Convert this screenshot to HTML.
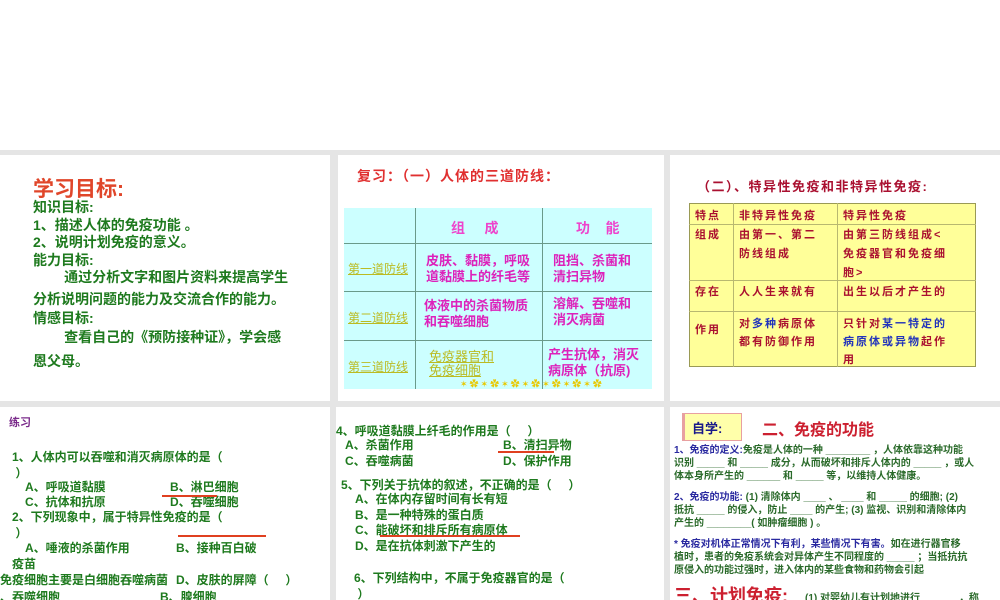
<!DOCTYPE html>
<html><head><meta charset="utf-8"><style>
*{margin:0;padding:0;box-sizing:border-box}
body{width:1000px;height:600px;position:relative;background:#fff;overflow:hidden;font-family:"Liberation Sans","Noto Sans CJK SC",sans-serif}
.bg{position:absolute;left:0;top:150px;width:1000px;height:450px;background:#e5e5e5}
.p{position:absolute;background:#fff;overflow:hidden}
.t{position:absolute;white-space:nowrap}
.g{color:#1e7a1e;font-weight:bold}
</style></head><body>
<div class="bg"></div>
<div class="p" style="left:0;top:155px;width:330px;height:246px">
<div class="t" style="left:33px;top:18px;font-size:21px;color:#e0462a;font-weight:bold">学习目标:</div>
<div class="t g" style="left:33px;top:44px;font-size:14px;line-height:17.5px">知识目标:<br>1、描述人体的免疫功能 。<br>2、说明计划免疫的意义。<br>能力目标:<br>&nbsp;&nbsp;&nbsp;&nbsp;&nbsp;&nbsp;&nbsp;&nbsp;通过分析文字和图片资料来提高学生</div>
<div class="t g" style="left:33px;top:135px;font-size:14px;line-height:19px">分析说明问题的能力及交流合作的能力。<br>情感目标:<br>&nbsp;&nbsp;&nbsp;&nbsp;&nbsp;&nbsp;&nbsp;&nbsp;查看自己的《预防接种证》，学会感</div>
<div class="t g" style="left:33px;top:196px;font-size:14px">恩父母。</div>
</div>
<div class="p" style="left:338px;top:155px;width:326px;height:246px">
<div class="t" style="left:19px;top:11px;font-size:14px;color:#e03030;font-weight:bold;letter-spacing:1px">复习：（一）人体的三道防线：</div>
<div style="position:absolute;left:6px;top:53px;width:308px;height:181px;background:#ccffff"></div>
<div style="position:absolute;left:77px;top:53px;width:1px;height:181px;background:#6a9a8a"></div>
<div style="position:absolute;left:204px;top:53px;width:1px;height:181px;background:#6a9a8a"></div>
<div style="position:absolute;left:6px;top:88px;width:308px;height:1px;background:#6a9a8a"></div>
<div style="position:absolute;left:6px;top:136px;width:308px;height:1px;background:#6a9a8a"></div>
<div style="position:absolute;left:6px;top:185px;width:308px;height:1px;background:#6a9a8a"></div>
<div class="t" style="left:113px;top:63px;font-size:14px;color:#ee44cc;font-weight:bold">组&nbsp;&nbsp;&nbsp;&nbsp;&nbsp;成</div>
<div class="t" style="left:238px;top:63px;font-size:14px;color:#ee44cc;font-weight:bold">功&nbsp;&nbsp;&nbsp;&nbsp;能</div>
<div class="t" style="left:10px;top:105px;font-size:12px;color:#bbbb22;text-decoration:underline">第一道防线</div>
<div class="t" style="left:10px;top:154px;font-size:12px;color:#bbbb22;text-decoration:underline">第二道防线</div>
<div class="t" style="left:10px;top:203px;font-size:12px;color:#bbbb22;text-decoration:underline">第三道防线</div>
<div class="t" style="left:88px;top:98px;font-size:13px;line-height:16px;color:#dd22bb;font-weight:bold">皮肤、黏膜，呼吸<br>道黏膜上的纤毛等</div>
<div class="t" style="left:215px;top:98px;font-size:13px;line-height:16px;color:#dd22bb;font-weight:bold">阻挡、杀菌和<br>清扫异物</div>
<div class="t" style="left:86px;top:143px;font-size:13px;line-height:16px;color:#dd22bb;font-weight:bold">体液中的杀菌物质<br>和吞噬细胞</div>
<div class="t" style="left:215px;top:141px;font-size:13px;line-height:16px;color:#dd22bb;font-weight:bold">溶解、吞噬和<br>消灭病菌</div>
<div class="t" style="left:91px;top:195px;font-size:13px;line-height:14px;color:#bbbb22;text-decoration:underline">免疫器官和<br>免疫细胞</div>
<div class="t" style="left:210px;top:192px;font-size:13px;line-height:16px;color:#dd22bb;font-weight:bold">产生抗体，消灭<br>病原体（抗原)</div>
<div class="t" style="left:122px;top:222px;font-size:9px;color:#e8c800;letter-spacing:2px">✶✿✶✿✶✿✶✿✶✿✶✿✶✿</div>
</div>
<div class="p" style="left:670px;top:155px;width:330px;height:246px">
<div class="t" style="left:27px;top:21px;font-size:13px;color:#aa1030;font-weight:bold;letter-spacing:1.5px">（二）、特异性免疫和非特异性免疫:</div>
<div style="position:absolute;left:19px;top:48px;width:287px;height:164px;background:#ffff99;border:1px solid #9a9a55"></div>
<div style="position:absolute;left:63px;top:48px;width:1px;height:164px;background:#b8b870"></div>
<div style="position:absolute;left:167px;top:48px;width:1px;height:164px;background:#b8b870"></div>
<div style="position:absolute;left:19px;top:69px;width:287px;height:1px;background:#b8b870"></div>
<div style="position:absolute;left:19px;top:125px;width:287px;height:1px;background:#b8b870"></div>
<div style="position:absolute;left:19px;top:156px;width:287px;height:1px;background:#b8b870"></div>
<div class="t" style="left:25px;top:52px;font-size:11px;line-height:19px;color:#aa1030;font-weight:bold;letter-spacing:2px">特点<br>组成<br><br><br>存在<br><br>作用</div>
<div class="t" style="left:69px;top:52px;font-size:11px;line-height:19px;color:#aa1030;font-weight:bold;letter-spacing:2px">非特异性免疫<br>由第一、第二<br>防线组成</div>
<div class="t" style="left:173px;top:52px;font-size:11px;line-height:19px;color:#aa1030;font-weight:bold;letter-spacing:2px">特异性免疫<br>由第三防线组成&lt;<br>免疫器官和免疫细<br>胞&gt;</div>
<div class="t" style="left:69px;top:128px;font-size:11px;color:#aa1030;font-weight:bold;letter-spacing:2px">人人生来就有</div>
<div class="t" style="left:173px;top:128px;font-size:11px;color:#aa1030;font-weight:bold;letter-spacing:2px">出生以后才产生的</div>
<div class="t" style="left:69px;top:160px;font-size:11px;line-height:18px;color:#aa1030;font-weight:bold;letter-spacing:2px">对<span style="color:#2233bb">多种</span>病原体<br>都有防御作用</div>
<div class="t" style="left:173px;top:160px;font-size:11px;line-height:18px;color:#aa1030;font-weight:bold;letter-spacing:2px">只针对<span style="color:#2233bb">某一特定的<br>病原体或异物</span>起作<br>用</div>
</div>
<div class="p" style="left:0;top:407px;width:330px;height:193px">
<div class="t" style="left:9px;top:7px;font-size:11px;color:#7a2a8a;font-weight:bold">练习</div>
<div class="t g" style="left:12px;top:42px;font-size:12px;line-height:16px">1、人体内可以吞噬和消灭病原体的是（<br>&nbsp;）</div>
<div class="t g" style="left:25px;top:73px;font-size:12px;line-height:15px">A、呼吸道黏膜<br>C、抗体和抗原</div>
<div class="t g" style="left:170px;top:73px;font-size:12px;line-height:15px">B、淋巴细胞<br>D、吞噬细胞</div>
<div style="position:absolute;left:162px;top:88px;width:55px;height:2px;background:#e04020"></div>
<div class="t g" style="left:12px;top:102px;font-size:12px;line-height:16px">2、下列现象中，属于特异性免疫的是（<br>&nbsp;）</div>
<div style="position:absolute;left:178px;top:128px;width:88px;height:2px;background:#e04020"></div>
<div class="t g" style="left:25px;top:132px;font-size:12px">A、唾液的杀菌作用</div>
<div class="t g" style="left:176px;top:132px;font-size:12px">B、接种百白破</div>
<div class="t g" style="left:12px;top:148px;font-size:12px">疫苗</div>
<div class="t g" style="left:0;top:164px;font-size:12px">免疫细胞主要是白细胞吞噬病菌</div>
<div class="t g" style="left:176px;top:164px;font-size:12px">D、皮肤的屏障（&nbsp;&nbsp;&nbsp;&nbsp;&nbsp;）</div>
<div class="t g" style="left:0;top:181px;font-size:12px">、吞噬细胞</div>
<div class="t g" style="left:160px;top:181px;font-size:12px">B、腺细胞</div>
</div>
<div class="p" style="left:336px;top:407px;width:328px;height:193px">
<div class="t g" style="left:0;top:15px;font-size:12px">4、呼吸道黏膜上纤毛的作用是（&nbsp;&nbsp;&nbsp;&nbsp;&nbsp;）</div>
<div class="t g" style="left:9px;top:30px;font-size:12px;line-height:16px">A、杀菌作用<br>C、吞噬病菌</div>
<div class="t g" style="left:167px;top:30px;font-size:12px;line-height:16px">B、清扫异物<br>D、保护作用</div>
<div style="position:absolute;left:162px;top:44px;width:56px;height:2px;background:#e04020"></div>
<div class="t g" style="left:5px;top:69px;font-size:12px">5、下列关于抗体的叙述，不正确的是（&nbsp;&nbsp;&nbsp;&nbsp;&nbsp;）</div>
<div class="t g" style="left:19px;top:85px;font-size:12px;line-height:15.5px">A、在体内存留时间有长有短<br>B、是一种特殊的蛋白质<br>C、能破坏和排斥所有病原体<br>D、是在抗体刺激下产生的</div>
<div style="position:absolute;left:44px;top:128px;width:140px;height:2px;background:#e04020"></div>
<div class="t g" style="left:18px;top:163px;font-size:12px;line-height:16px">6、下列结构中，不属于免疫器官的是（<br>&nbsp;）</div>
</div>
<div class="p" style="left:670px;top:407px;width:330px;height:193px">
<div style="position:absolute;left:12px;top:6px;width:60px;height:28px;background:#ffffaa;border:1px solid #e8a0a0;border-left:3px solid #e8a0a0"></div>
<div class="t" style="left:22px;top:11px;font-size:13px;color:#1a1a8a;font-weight:bold">自学:</div>
<div class="t" style="left:92px;top:9px;font-size:16px;color:#cc2030;font-weight:bold">二、免疫的功能</div>
<div class="t" style="left:4px;top:37px;font-size:10px;line-height:13px;color:#2a6a2a;font-weight:bold"><span style="color:#2a2aa0">1、免疫的定义:</span>免疫是人体的一种 ________ ，人体依靠这种功能<br>识别 _____ 和 _____ 成分，从而破坏和排斥人体内的 _____ ，或人<br>体本身所产生的 ______ 和 _____ 等，以维持人体健康。</div>
<div class="t" style="left:4px;top:84px;font-size:10px;line-height:13px;color:#2a6a2a;font-weight:bold"><span style="color:#2a2aa0">2、免疫的功能:</span> (1) 清除体内 ____ 、 ____ 和 _____ 的细胞; (2)<br>抵抗 _____ 的侵入，防止 ____ 的产生; (3) 监视、识别和清除体内<br>产生的 ________( 如肿瘤细胞 ) 。</div>
<div class="t" style="left:4px;top:131px;font-size:10px;line-height:13px;color:#2a6a2a;font-weight:bold"><span style="color:#2a2aa0">* 免疫对机体正常情况下有利，某些情况下有害。</span>如在进行器官移<br>植时，患者的免疫系统会对异体产生不同程度的 _____ ；当抵抗抗<br>原侵入的功能过强时，进入体内的某些食物和药物会引起</div>
<div class="t" style="left:4px;top:175px;font-size:18px;color:#cc2030;font-weight:bold">三、计划免疫:</div>
<div class="t" style="left:135px;top:182px;font-size:10px;color:#2a6a2a;font-weight:bold">(1) 对婴幼儿有计划地进行 ______ ，称</div>
</div>
</body></html>
